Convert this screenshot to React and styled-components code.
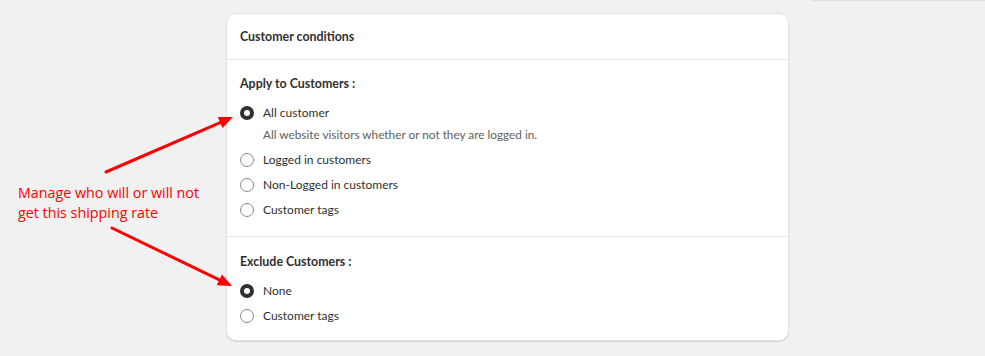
import React, { useState } from "react";
import styled, { createGlobalStyle } from "styled-components";

const GlobalStyle = createGlobalStyle`
  html, body {
    margin: 0;
    padding: 0;
    background: #f1f1f1;
  }
  body {
    font-family: Lato, "Open Sans", sans-serif;
    color: #303030;
  }
`;

const Page = styled.div`
  position: relative;
  width: 985px;
  height: 356px;
  overflow: hidden;
  background: #f1f1f1;
`;

// faint strip top right (page chrome)
const TopStrip = styled.div`
  height: 1px;
  margin-left: 812px;
  background: #e0e0e0;
`;

const Card = styled.div`
  width: 561px;
  margin: 12px 0 0 226px;
  background: #fff;
  border: 1px solid #e3e3e3;
  border-radius: 10px;
  box-shadow: 0 1px 0 #d4d4d4;
`;

const CardHeader = styled.div`
  height: 45px;
  display: flex;
  align-items: center;
  padding: 0 13px;
  border-bottom: 1px solid #e7e7e7;
  font-size: 12.4px;
  font-weight: 700;
  color: #303030;
`;

const Section = styled.div`
  padding: ${(p) => p.$pad};
  border-bottom: ${(p) => (p.$last ? "none" : "1px solid #e7e7e7")};
`;

const SectionTitle = styled.div`
  font-size: 12.4px;
  font-weight: 700;
  line-height: 16px;
  margin-bottom: 8px;
`;

const Options = styled.div`
  display: flex;
  flex-direction: column;
`;

const Option = styled.label`
  display: flex;
  flex-direction: column;
  cursor: pointer;
`;

const OptionRow = styled.div`
  display: flex;
  align-items: center;
  gap: 9px;
  height: 25px;
  font-size: 12px;
  color: #303030;
`;

const Radio = styled.span`
  box-sizing: border-box;
  width: 14px;
  height: 14px;
  border-radius: 50%;
  border: ${(p) => (p.$checked ? "4px solid #303030" : "1px solid #8a8a8a")};
  background: #fff;
  flex-shrink: 0;
`;

const HelpText = styled.div`
  font-size: 11.8px;
  line-height: 16px;
  color: #616161;
  margin: 2px 0 4px 23px;
`;

const Note = styled.div`
  position: absolute;
  left: 18px;
  top: 183px;
  width: 220px;
  font-family: "Open Sans", sans-serif;
  font-size: 14.3px;
  line-height: 20px;
  color: #ff0000;
`;

const Arrows = styled.svg`
  position: absolute;
  left: 0;
  top: 0;
  pointer-events: none;
`;

function RadioGroup({ options, value, onChange }) {
  return (
    <Options>
      {options.map((o) => (
        <Option key={o.id} onClick={() => onChange(o.id)}>
          <OptionRow>
            <Radio $checked={value === o.id} />
            {o.label}
          </OptionRow>
          {o.help && <HelpText>{o.help}</HelpText>}
        </Option>
      ))}
    </Options>
  );
}

const applyOptions = [
  { id: "all", label: "All customer", help: "All website visitors whether or not they are logged in." },
  { id: "logged", label: "Logged in customers" },
  { id: "guest", label: "Non-Logged in customers" },
  { id: "tags", label: "Customer tags" },
];

const excludeOptions = [
  { id: "none", label: "None" },
  { id: "tags", label: "Customer tags" },
];

function Arrow({ x1, y1, x2, y2 }) {
  const a = Math.atan2(y2 - y1, x2 - x1);
  const len = 14;
  const w = 6;
  const bx = x2 - len * Math.cos(a);
  const by = y2 - len * Math.sin(a);
  const px = -Math.sin(a) * w;
  const py = Math.cos(a) * w;
  return (
    <g>
      <line x1={x1} y1={y1} x2={bx} y2={by} stroke="#ff0000" strokeWidth="3" strokeLinecap="round" />
      <polygon points={`${x2},${y2} ${bx + px},${by + py} ${bx - px},${by - py}`} fill="#ff0000" />
    </g>
  );
}

export default function App() {
  const [apply, setApply] = useState("all");
  const [exclude, setExclude] = useState("none");

  return (
    <Page>
      <GlobalStyle />
      <TopStrip />
      <Card>
        <CardHeader>Customer conditions</CardHeader>
        <Section $pad="16px 13px 14px">
          <SectionTitle>Apply to Customers :</SectionTitle>
          <RadioGroup options={applyOptions} value={apply} onChange={setApply} />
        </Section>
        <Section $pad="17px 13px 12px" $last>
          <SectionTitle>Exclude Customers :</SectionTitle>
          <RadioGroup options={excludeOptions} value={exclude} onChange={setExclude} />
        </Section>
      </Card>

      <Note>
        Manage who will or will not
        <br />
        get this shipping rate
      </Note>
      <Arrows width="985" height="356">
        <Arrow x1={106} y1={172} x2={233} y2={117} />
        <Arrow x1={112} y1={228} x2={232} y2={286} />
      </Arrows>
    </Page>
  );
}
